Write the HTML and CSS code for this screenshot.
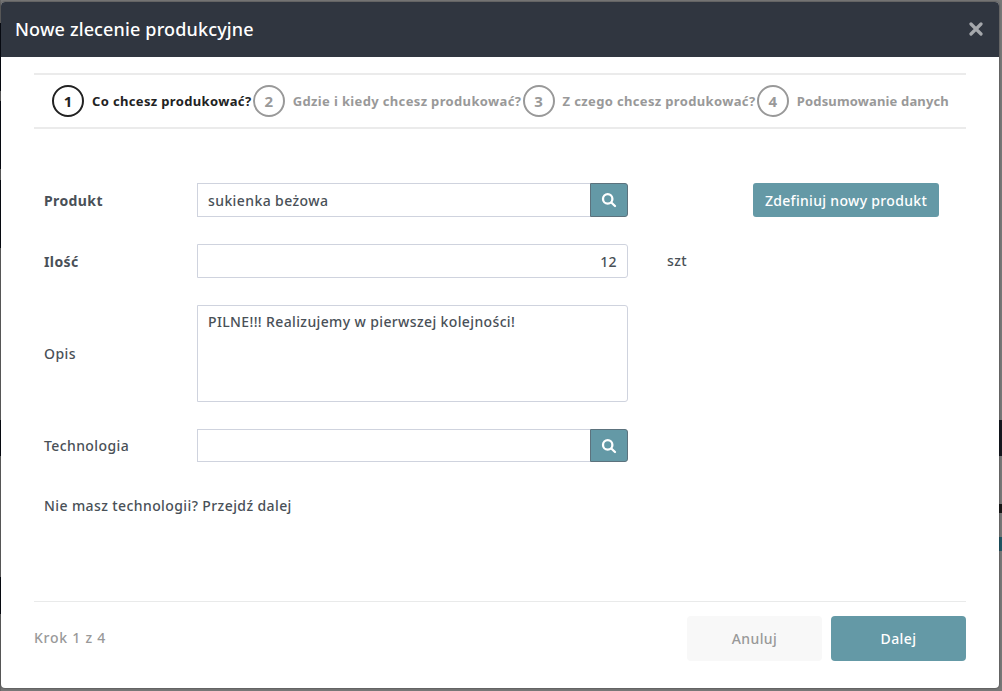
FILE: index.html
```
<!DOCTYPE html>
<html lang="pl">
<head>
<meta charset="utf-8">
<title>Nowe zlecenie produkcyjne</title>
<link rel="stylesheet" href="styles.css">
</head>
<body>
<div class="modal">
  <header class="modal-header">
    <h1 class="title"><span>Nowe zlecenie produkcyjne</span></h1>
    <button class="close" aria-label="Zamknij"><svg width="14" height="14" viewBox="0 0 14 14"><path d="M2 2 12 12M12 2 2 12"/></svg></button>
  </header>
  <main class="modal-body">
    <ol class="steps">
      <li class="step active"><span class="num">1</span><span class="step-label">Co chcesz produkować?</span></li>
      <li class="step"><span class="num">2</span><span class="step-label">Gdzie i kiedy chcesz produkować?</span></li>
      <li class="step"><span class="num">3</span><span class="step-label">Z czego chcesz produkować?</span></li>
      <li class="step"><span class="num">4</span><span class="step-label summary">Podsumowanie danych</span></li>
    </ol>
    <div class="form">
      <div class="row">
        <span class="label required">Produkt</span>
        <div class="group"><div class="field">sukienka beżowa</div><button class="search" aria-label="Szukaj"><svg width="16" height="16" viewBox="0 0 16 16"><circle cx="6.7" cy="6.9" r="4.7"/><path d="M10.3 10.5 14 14"/></svg></button></div>
        <button class="define">Zdefiniuj nowy produkt</button>
      </div>
      <div class="row">
        <span class="label required">Ilość</span>
        <div class="field number">12</div>
        <span class="unit">szt</span>
      </div>
      <div class="row">
        <span class="label">Opis</span>
        <div class="field area">PILNE!!! Realizujemy w pierwszej kolejności!</div>
      </div>
      <div class="row short">
        <span class="label">Technologia</span>
        <div class="group"><div class="field"></div><button class="search" aria-label="Szukaj"><svg width="16" height="16" viewBox="0 0 16 16"><circle cx="6.7" cy="6.9" r="4.7"/><path d="M10.3 10.5 14 14"/></svg></button></div>
      </div>
      <p class="hint">Nie masz technologii? Przejdź dalej</p>
    </div>
  </main>
  <footer class="modal-footer">
    <span class="progress">Krok 1 z 4</span>
    <button class="btn cancel">Anuluj</button>
    <button class="btn next">Dalej</button>
  </footer>
</div>
</body>
</html>
```
FILE: styles.css
```
* { box-sizing: border-box; }
body {
  margin: 0;
  width: 1002px;
  height: 691px;
  padding: 2px 3px 3px 1px;
  overflow: hidden;
  font: 500 14px/20px "Noto Sans", "Open Sans", sans-serif;
  letter-spacing: 0.4px;
  color: #495057;
  background:
    linear-gradient(#666 23px, #080b13 23px 91px, #666 91px 101px, #080b13 101px 169px, #666 169px 180px, #080b13 180px 248px, #666 248px 420px, #080b13 420px 456px, #666 456px 577px, #080b13 577px 614px, #666 614px) 0 0 / 1px 100% no-repeat,
    linear-gradient(transparent 420px, #15181f 420px 456px, transparent 456px 504px, #171717 504px 513px, transparent 513px 537px, #1f5563 537px 551px, transparent 551px) 100% 0 / 3px 100% no-repeat,
    #777;
}
button { font: inherit; letter-spacing: inherit; border: 0; padding: 0; }
.modal { height: 686px; display: flex; flex-direction: column; background: #fff; border-radius: 4px; overflow: hidden; box-shadow: 0 0 2px rgba(0, 0, 0, 0.6); }
.modal-header { height: 55px; background: #303640; display: flex; align-items: center; justify-content: space-between; padding: 0 16px 2px 14px; }
.title { margin: 0; font-size: 18px; font-weight: 500; line-height: 24px; letter-spacing: 0.15px; color: #fff; }
.close { display: flex; width: 14px; height: 14px; background: none; }
.close path { stroke: #a5a8ac; stroke-width: 3.2; stroke-linecap: round; }
.modal-body { flex: 1; padding: 16px 33px 0; }
.steps { list-style: none; margin: 0; padding: 0 17px 0 18px; height: 56px; border: solid #ebebeb; border-width: 2px 0; display: flex; align-items: center; justify-content: space-between; }
.step { display: flex; align-items: center; gap: 8px; color: #999; font-weight: 700; font-size: 13px; letter-spacing: 0.35px; white-space: nowrap; }
.active { color: #222; }
.summary { letter-spacing: 0.15px; }
.num { width: 32px; height: 32px; border: 2px solid; border-radius: 50%; display: grid; place-items: center; font-size: 15px; letter-spacing: 0; }
.form { padding: 54px 27px 0 10px; display: flex; flex-direction: column; gap: 27px; }
.row { display: grid; grid-template-columns: 153px 431px 1fr; align-items: center; min-height: 34px; }
.short { min-height: 33px; height: 33px; }
.required { font-weight: 700; padding-top: 2px; }
.group { display: flex; height: 34px; }
.short .group { height: 33px; }
.field { height: 34px; border: 1px solid #cfd3de; border-radius: 0 3px 3px 0; padding: 7px 10px; line-height: 19px; white-space: nowrap; }
.group .field { flex: 1; height: auto; border-right: 0; border-radius: 0; }
.number { text-align: right; }
.area { height: 97px; padding-top: 6px; letter-spacing: 0.37px; }
.search { width: 38px; background: #6499a6; border: 1px solid #5c727d; border-radius: 0 3px 3px 0; display: grid; place-items: center; }
.search svg { fill: none; stroke: #fff; stroke-width: 2.3; stroke-linecap: round; }
.define { justify-self: end; width: 186px; height: 34px; padding-top: 2px; border-radius: 3px; background: #6499a6; color: #fff; letter-spacing: 0.32px; white-space: nowrap; }
.unit { margin-left: 39px; }
.hint { margin: 7px 0 0; }
.modal-footer { height: 87px; margin: 0 33px; border-top: 1px solid #e9eaea; display: flex; align-items: flex-start; gap: 9px; padding-top: 14px; }
.progress { margin: 12px auto 0 0; color: #999; letter-spacing: 0.75px; }
.btn { width: 135px; height: 45px; border-radius: 4px; }
.cancel { background: #f8f8f8; color: #999; }
.next { background: #6499a6; color: #fff; }
```
